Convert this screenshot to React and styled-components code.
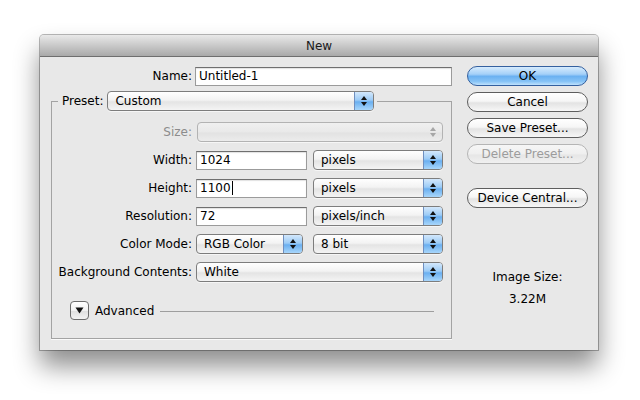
import React from 'react'
import styled, { createGlobalStyle, css } from 'styled-components'

const GlobalStyle = createGlobalStyle`
  html, body {
    margin: 0;
    padding: 0;
    background: #ffffff;
  }
  body {
    font-family: "DejaVu Sans", "Liberation Sans", sans-serif;
    font-size: 12px;
    color: #000;
  }
`

const Page = styled.div`
  width: 640px;
  height: 400px;
  overflow: hidden;
  padding: 35px 0 0 40px;
  box-sizing: border-box;
`

const Window = styled.div`
  width: 558px;
  height: 315px;
  background: #e8e8e8;
  border-radius: 4px 4px 0 0;
  box-shadow: 0 0 0 1px rgba(0, 0, 0, 0.28), 0 16px 26px rgba(0, 0, 0, 0.45);
  display: flex;
  flex-direction: column;
`

const TitleBar = styled.div`
  height: 21px;
  flex: none;
  display: flex;
  align-items: center;
  justify-content: center;
  border-radius: 4px 4px 0 0;
  background: linear-gradient(#e9e9e9, #c9c9c9 50%, #a9a9a9);
  border-bottom: 1px solid #6e6e6e;
  font-size: 12px;
  color: #1a1a1a;
`

const Body = styled.div`
  display: flex;
  padding: 9px 10px 0 11px;
  gap: 15px;
`

const MainColumn = styled.div`
  width: 401px;
  display: flex;
  flex-direction: column;
  gap: 5px;
`

const SideColumn = styled.div`
  width: 121px;
  display: flex;
  flex-direction: column;
`

const Row = styled.div`
  display: flex;
  align-items: center;
  height: 20px;
  gap: ${p => p.$gap || 4}px;
`

const Label = styled.span`
  width: ${p => p.$width || 140}px;
  flex: none;
  text-align: right;
  white-space: nowrap;
  color: ${p => (p.$disabled ? '#8c8c8c' : '#000')};
`

const TextField = styled.div`
  width: ${p => p.$width}px;
  height: 19px;
  box-sizing: border-box;
  flex: none;
  background: #fff;
  border: 1px solid #9b9b9b;
  border-top-color: #6f6f6f;
  box-shadow: inset 0 1px 1px rgba(0, 0, 0, 0.12);
  padding: 0 3px;
  display: flex;
  align-items: center;
  line-height: 1;
`

const Caret = styled.span`
  display: inline-block;
  width: 1px;
  height: 14px;
  background: #000;
  margin-left: 1px;
`

const Popup = styled.div`
  width: ${p => p.$width}px;
  height: 20px;
  box-sizing: border-box;
  flex: none;
  display: flex;
  margin-left: ${p => p.$offset || 0}px;
  border: 1px solid ${p => (p.$disabled ? '#b3b3b3' : '#7d7d7d')};
  border-radius: 4px;
  overflow: hidden;
  background: linear-gradient(#ffffff, #f3f3f3 45%, #e4e4e4 55%, #f4f4f4);
  box-shadow: 0 1px 0 rgba(255, 255, 255, 0.6);
  ${p =>
    p.$disabled &&
    css`
      background: linear-gradient(#f0f0f0, #e9e9e9 50%, #e2e2e2 55%, #ececec);
    `}
`

const PopupText = styled.span`
  flex: 1;
  display: flex;
  align-items: center;
  padding-left: 7px;
  white-space: nowrap;
`

const PopupArrows = styled.span`
  width: 18px;
  flex: none;
  display: flex;
  align-items: center;
  justify-content: center;
  border-left: 1px solid ${p => (p.$disabled ? 'transparent' : '#6f8fbf')};
  background: ${p =>
    p.$disabled
      ? 'transparent'
      : 'linear-gradient(#d3e8fc, #9ccbf6 45%, #6aaff0 55%, #a8d6fb)'};
`

const Fieldset = styled.fieldset`
  margin: 0;
  padding: 11px 7px 18px 0;
  border: 1px solid #a3a3a3;
  box-shadow: 0 1px 0 #fafafa;
  display: flex;
  flex-direction: column;
  gap: 8px;
`

const Legend = styled.legend`
  padding: 0 3px 0 4px;
  margin-left: 6px;
  display: flex;
  align-items: center;
  gap: 4px;
`

const AdvancedRow = styled.div`
  display: flex;
  align-items: center;
  gap: 6px;
  height: 19px;
  margin-top: 11px;
  padding-left: 18px;
`

const Disclosure = styled.div`
  width: 19px;
  height: 19px;
  box-sizing: border-box;
  flex: none;
  border: 1px solid #6c6c6c;
  border-radius: 4px;
  background: linear-gradient(#ffffff, #f1f1f1 50%, #e0e0e0 55%, #f2f2f2);
  display: flex;
  align-items: center;
  justify-content: center;
`

const Rule = styled.div`
  flex: 1;
  height: 1px;
  background: #9e9e9e;
  margin: 1px 10px 0 0;
`

const Button = styled.div`
  height: 20px;
  box-sizing: border-box;
  border-radius: 10px;
  display: flex;
  align-items: center;
  justify-content: center;
  margin-bottom: ${p => p.$after || 6}px;
  border: 1px solid ${p => (p.$disabled ? '#b5b5b5' : '#5e5e5e')};
  color: ${p => (p.$disabled ? '#9c9c9c' : '#000')};
  background: ${p =>
    p.$primary
      ? 'linear-gradient(#d6ebfd, #a4d0f8 40%, #6bb1f1 52%, #86c3f6 80%, #bfe2fd)'
      : p.$disabled
      ? 'linear-gradient(#f6f6f6, #efefef 50%, #e6e6e6 55%, #f0f0f0)'
      : 'linear-gradient(#ffffff, #f6f6f6 45%, #e3e3e3 55%, #f7f7f7)'};
  ${p =>
    p.$primary &&
    css`
      border-color: #34609f;
    `}
  white-space: nowrap;
`

const SizeInfo = styled.div`
  margin-top: 56px;
  display: flex;
  flex-direction: column;
  align-items: center;
  gap: 8px;
  line-height: 14px;
`

const Arrows = ({ disabled }) => (
  <svg width="8" height="12" viewBox="0 0 8 12">
    <path d="M4 1 L7 5 L1 5 Z" fill={disabled ? '#a6a6a6' : '#111'} />
    <path d="M4 11 L7 7 L1 7 Z" fill={disabled ? '#a6a6a6' : '#111'} />
  </svg>
)

const Select = ({ width, value, disabled, offset }) => (
  <Popup $width={width} $disabled={disabled} $offset={offset}>
    <PopupText>{value}</PopupText>
    <PopupArrows $disabled={disabled}>
      <Arrows disabled={disabled} />
    </PopupArrows>
  </Popup>
)

const App = () => (
  <Page>
    <GlobalStyle />
    <Window>
      <TitleBar>New</TitleBar>
      <Body>
        <MainColumn>
          <Row $gap={3}>
            <Label $width={141}>Name:</Label>
            <TextField $width={257}>Untitled-1</TextField>
          </Row>

          <Fieldset>
            <Legend>
              Preset:
              <Select width={267} value="Custom" />
            </Legend>

            <Row>
              <Label $disabled>Size:</Label>
              <Select width={246} value="" disabled offset={1} />
            </Row>
            <Row>
              <Label>Width:</Label>
              <TextField $width={111}>1024</TextField>
              <Select width={130} value="pixels" offset={2} />
            </Row>
            <Row>
              <Label>Height:</Label>
              <TextField $width={111}>
                1100
                <Caret />
              </TextField>
              <Select width={130} value="pixels" offset={2} />
            </Row>
            <Row>
              <Label>Resolution:</Label>
              <TextField $width={111}>72</TextField>
              <Select width={130} value="pixels/inch" offset={2} />
            </Row>
            <Row>
              <Label>Color Mode:</Label>
              <Select width={107} value="RGB Color" />
              <Select width={130} value="8 bit" offset={6} />
            </Row>
            <Row>
              <Label>Background Contents:</Label>
              <Select width={247} value="White" />
            </Row>

            <AdvancedRow>
              <Disclosure>
                <svg width="9" height="7" viewBox="0 0 9 7">
                  <path d="M0.5 0.5 L8.5 0.5 L4.5 6.5 Z" fill="#111" />
                </svg>
              </Disclosure>
              Advanced
              <Rule />
            </AdvancedRow>
          </Fieldset>
        </MainColumn>

        <SideColumn>
          <Button $primary>OK</Button>
          <Button>Cancel</Button>
          <Button>Save Preset...</Button>
          <Button $disabled $after={24}>
            Delete Preset...
          </Button>
          <Button>Device Central...</Button>
          <SizeInfo>
            <span>Image Size:</span>
            <span>3.22M</span>
          </SizeInfo>
        </SideColumn>
      </Body>
    </Window>
  </Page>
)

export default App
